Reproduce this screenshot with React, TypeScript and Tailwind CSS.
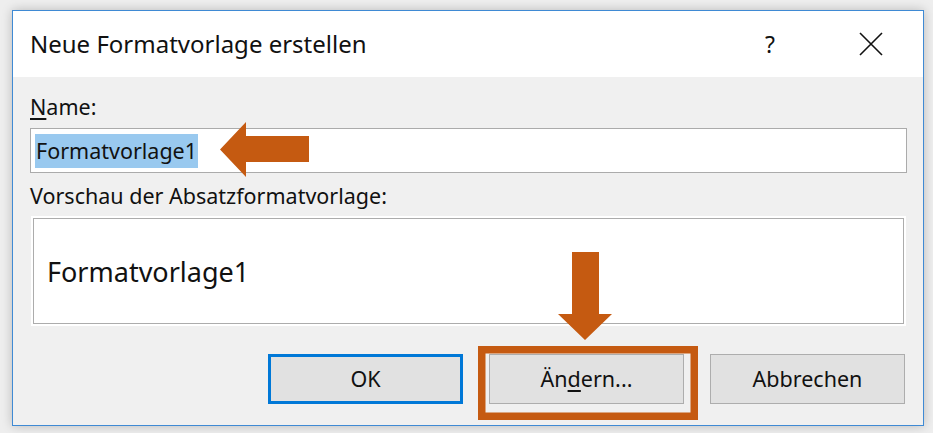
import React from 'react'

const ORANGE = '#c55a11'

function DialogButton({ children, primary = false }: { children: React.ReactNode; primary?: boolean }) {
  return (
    <div
      className={[
        'flex h-[50px] w-[195px] items-center justify-center bg-[#e1e1e1] text-[21.5px] text-[#111]',
        primary ? 'border-[3px] border-[#0078d7]' : 'border border-[#adadad]'
      ].join(' ')}
    >
      {children}
    </div>
  )
}

export default function App() {
  return (
    <div
      className="relative h-[433px] w-[933px] overflow-hidden bg-[#eeeeee] pl-[12px] pt-[10px]"
      style={{ fontFamily: '"Noto Sans", "Open Sans", sans-serif' }}
    >
      <div className="flex h-[416px] w-[912px] flex-col border border-[#3f8ad4] bg-[#f0f0f0] shadow-[0_0_10px_rgba(0,0,0,0.22)]">
        {/* title bar */}
        <div className="flex h-[66px] shrink-0 items-center bg-white pl-[17px] pr-[40px]">
          <div className="flex-1 text-[24px] leading-none text-[#111]">Neue Formatvorlage erstellen</div>
          <div className="mr-[84px] text-[23px] leading-none text-[#111]">?</div>
          <svg width="24" height="24" viewBox="0 0 24 24" className="text-[#111]">
            <path d="M1 1 L23 23 M23 1 L1 23" stroke="currentColor" strokeWidth="1.6" fill="none" />
          </svg>
        </div>

        {/* body */}
        <div className="flex flex-1 flex-col pl-[17px] pr-[16px]">
          <div className="mt-[16px] text-[21.5px] leading-[28px] text-[#111]">
            <span className="underline underline-offset-[3px]">N</span>ame:
          </div>
          <div className="mt-[7px] flex h-[45px] items-center border border-[#ababab] bg-white pl-[4px]">
            <span className="bg-[#99c9ef] px-[1px] py-[3px] text-[21.5px] leading-[28px] text-[#111]">Formatvorlage1</span>
          </div>
          <div className="mt-[9px] text-[21.5px] leading-[28px] text-[#111]">Vorschau der Absatzformatvorlage:</div>
          <div className="ml-[3px] mr-[3px] mt-[8px] flex h-[106px] items-center border border-[#acacac] bg-white pl-[13px] outline-2 outline-white">
            <span className="text-[27px] leading-none text-[#111]">Formatvorlage1</span>
          </div>
          <div className="mt-[30px] flex justify-end gap-[26px] pr-[2px]">
            <DialogButton primary>OK</DialogButton>
            <DialogButton>
              <span>
                Än<span className="underline underline-offset-[3px]">d</span>ern...
              </span>
            </DialogButton>
            <DialogButton>Abbrechen</DialogButton>
          </div>
        </div>
      </div>

      {/* annotations */}
      <svg className="pointer-events-none absolute left-0 top-0" width="933" height="433" viewBox="0 0 933 433">
        <polygon points="220,149.5 246,122 246,136 309,136 309,162 246,162 246,177" fill={ORANGE} />
        <polygon points="572,252 599,252 599,314 612,314 585,340 558,314 572,314" fill={ORANGE} />
        <rect x="481.75" y="349.75" width="212.5" height="66.5" fill="none" stroke={ORANGE} strokeWidth="7.5" />
      </svg>
    </div>
  )
}
